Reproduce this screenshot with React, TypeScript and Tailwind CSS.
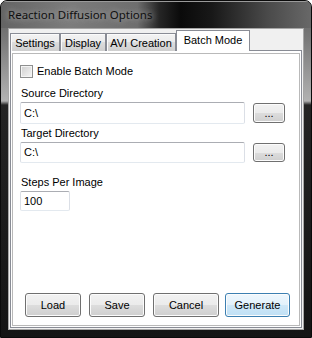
const ui = "font-['Liberation_Sans',Arial,sans-serif] text-[11px] leading-[13px] text-black";

function WinButton({ label, width, primary = false }: { label: string; width: string; primary?: boolean }) {
  return (
    <button
      className={
        "h-[24px] rounded-[3px] border flex items-center justify-center shadow-[inset_0_0_0_1px_#fcfcfc] " +
        width +
        (primary
          ? " border-[#3c7fb1] bg-[linear-gradient(to_bottom,#eef7fd_0%,#e3f1fb_50%,#d0e8f8_50%,#bfe0f5_100%)]"
          : " border-[#707070] bg-[linear-gradient(to_bottom,#f2f2f2_0%,#ebebeb_50%,#dddddd_50%,#cfcfcf_100%)]")
      }
    >
      {label}
    </button>
  );
}

function TextBox({ value, width, height }: { value: string; width: string; height: string }) {
  return (
    <div
      className={
        "flex items-center pl-[3px] bg-white rounded-[2px] border border-[#dbdfe6] border-t-[#abadb3] border-b-[#e3e9ef] " +
        width +
        " " +
        height
      }
    >
      {value}
    </div>
  );
}

function Tab({ label, width, active = false }: { label: string; width: string; active?: boolean }) {
  if (active) {
    return (
      <div
        className={
          "h-[21px] border border-b-0 border-[#898c95] bg-white flex justify-center pt-[3px] " + width
        }
      >
        {label}
      </div>
    );
  }
  return (
    <div
      className={
        "h-[18px] border border-b-0 border-[#898c95] flex justify-center pt-[3px] shadow-[inset_1px_1px_0_#fbfbfb] bg-[linear-gradient(to_bottom,#f3f3f3_0%,#ebebeb_50%,#dddddd_50%,#cfcfcf_100%)] " +
        width
      }
    >
      {label}
    </div>
  );
}

export default function App() {
  return (
    <div className="w-[312px] h-[338px] flex flex-col rounded-t-[7px] border border-[#0a0a0a] overflow-hidden bg-[linear-gradient(to_bottom,#5e5e5e_0px,#7a7a7a_40px,#b2b2b2_100px,#242424_104px,#141414_100%)]">
      {/* title bar */}
      <div className="h-[27px] shrink-0 flex items-center pl-[7px] bg-[linear-gradient(to_right,#646464_0%,#7c7c7c_22%,#6e6e6e_44%,#262626_51%,#0a0a0a_58%,#181818_68%,#4a4a4a_86%,#686868_100%)] shadow-[inset_0_1px_0_#9a9a9a]">
        <span className="font-['Noto_Sans',sans-serif] text-[11.5px] text-[#101010] [text-shadow:0_0_6px_#a8a8a8,0_0_10px_#909090]">
          Reaction Diffusion Options
        </span>
      </div>

      {/* client area */}
      <div className={"flex-1 mx-[7px] mb-[7px] border border-[#a6a6a6] bg-[#f0f0f0] flex flex-col p-[1px] " + ui}>
        <div className="flex items-end h-[21px] relative z-10 -mb-[1px]">
          <Tab label="Settings" width="w-[50px]" />
          <Tab label="Display" width="w-[46px]" />
          <Tab label="AVI Creation" width="w-[70px]" />
          <Tab label="Batch Mode" width="w-[74px]" active />
        </div>

        <div className="flex-1 border border-[#898c95] bg-white pt-[2px] px-[1px] pb-[1px] flex flex-col">
          <div className="flex-1 border border-[#b9b9b9] flex flex-col px-[7px] pt-[11px] pb-[8px]">
            <div className="flex items-center">
              <div className="w-[13px] h-[13px] border border-[#8e8f8f] shadow-[inset_0_0_0_1px_#f4f4f4] bg-[linear-gradient(135deg,#cfcfcf_0%,#e6e6e6_60%,#f6f6f6_100%)]" />
              <span className="ml-[4px]">Enable Batch Mode</span>
            </div>

            <div className="mt-[9px] ml-[1px]">Source Directory</div>
            <div className="mt-[2px] flex items-center">
              <TextBox value="C:\" width="w-[225px]" height="h-[22px]" />
              <div className="ml-[8px]">
                <WinButton label="..." width="w-[32px] !h-[20px]" />
              </div>
            </div>

            <div className="mt-[3px] ml-[1px]">Target Directory</div>
            <div className="mt-[2px] flex items-center">
              <TextBox value="C:\" width="w-[225px]" height="h-[21px]" />
              <div className="ml-[8px]">
                <WinButton label="..." width="w-[32px] !h-[19px]" />
              </div>
            </div>

            <div className="mt-[13px] ml-[1px]">Steps Per Image</div>
            <div className="mt-[2px]">
              <TextBox value="100" width="w-[50px]" height="h-[20px]" />
            </div>

            <div className="mt-auto flex ml-[5px]">
              <WinButton label="Load" width="w-[56px]" />
              <div className="ml-[8px]">
                <WinButton label="Save" width="w-[56px]" />
              </div>
              <div className="ml-[8px]">
                <WinButton label="Cancel" width="w-[66px]" />
              </div>
              <div className="ml-[6px]">
                <WinButton label="Generate" width="w-[65px]" primary />
              </div>
            </div>
          </div>
        </div>
      </div>
    </div>
  );
}
